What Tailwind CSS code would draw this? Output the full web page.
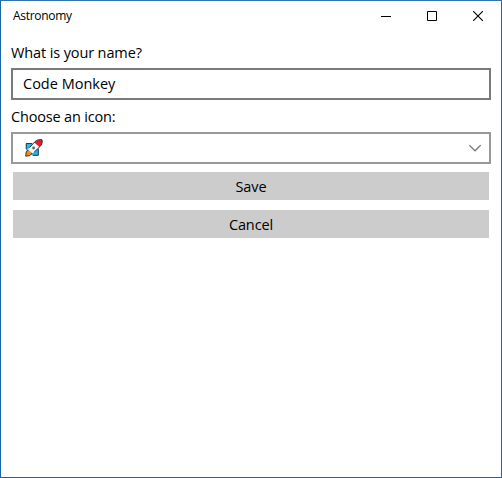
<!DOCTYPE html>
<html lang="en">
<head>
<meta charset="utf-8">
<title>Astronomy</title>
<script src="https://cdn.jsdelivr.net/npm/@tailwindcss/browser@4"></script>
</head>
<body class="bg-white">
<div class="flex h-[478px] w-[502px] flex-col overflow-hidden border border-t-[#2f74b0] border-l-[#1a68a6] border-r-[#2b6595] border-b-[#22639a] bg-white font-['Open_Sans','Noto_Sans',sans-serif] text-[14.5px] leading-5 text-black">
  <header class="flex h-[30px] shrink-0 items-center justify-between pl-3">
    <h1 class="text-[12px] leading-4 tracking-[-0.3px]">Astronomy</h1>
    <div class="flex h-full">
      <button class="flex w-[46px] items-center justify-center" aria-label="Minimize">
        <svg class="h-[10px] w-[10px]" viewBox="0 0 10 10" shape-rendering="crispEdges"><path d="M0 5h10v1H0z"/></svg>
      </button>
      <button class="flex w-[46px] items-center justify-center" aria-label="Maximize">
        <svg class="h-[10px] w-[10px]" viewBox="0 0 10 10" fill="none" stroke="#000"><path d="M.5 .5h9v9h-9z"/></svg>
      </button>
      <button class="flex w-[46px] items-center justify-center" aria-label="Close">
        <svg class="h-[10px] w-[10px]" viewBox="0 0 10 10" fill="none" stroke="#000" stroke-width="1.1"><path d="M0 0l10 10M10 0L0 10"/></svg>
      </button>
    </div>
  </header>
  <main class="flex flex-col px-[10px] pt-3">
    <label class="h-5 tracking-[-0.12px]">What is your name?</label>
    <div class="mt-[5px] flex h-8 items-center border-2 border-[#7a7a7a] pl-[10px]">Code Monkey</div>
    <label class="mt-[7px] h-5 tracking-[-0.17px]">Choose an icon:</label>
    <div class="mt-[5px] flex h-8 items-center justify-between border-2 border-[#999999] pr-2 pl-3">
      <svg class="h-[18px] w-[18px]" viewBox="0 0 18 18">
        <path d="M1 4.5h12.5v12H7L1 11z" fill="#20b9ec"/>
        <path d="M1.2 10V4.5H7M13.3 10v6.3H8" fill="none" stroke="#252525" stroke-width=".9"/>
        <path d="M.7 17.2l.5-4.5 2.9-2.2 3.4 3.3-2.8 2.9z" fill="#f58a1f" stroke="#30251d" stroke-width=".9"/>
        <path d="M2.8 10.5L9.9 2.7C11.6 1 14.5.2 17 .8c.7 2.7-.2 5-2 6.8l-7.4 7z" fill="#f4f4f4"/>
        <path d="M9.2 3.4C11.1 1.3 14.4.2 17 .8c.7 2.8-.2 5-2.4 7.2z" fill="#e51b32"/>
        <path d="M4.5 8.6l5.4-5.9C11.6 1 14.5.2 17 .8c.7 2.7-.2 5-2 6.8l-5.8 5.5" fill="none" stroke="#202020" stroke-width=".9"/>
        <circle cx="8.6" cy="9" r="1.4" fill="#3f6f83"/>
      </svg>
      <svg class="h-[8px] w-[12px]" viewBox="0 0 12 8" fill="none" stroke="#777" stroke-width="1.2"><path d="M.3 1.2L6 6.8l5.7-5.6"/></svg>
    </div>
    <button class="mx-[2px] mt-2 flex h-7 items-center justify-center bg-[#cccccc] pt-[2px] tracking-[-0.1px]">Save</button>
    <button class="mx-[2px] mt-[10px] flex h-7 items-center justify-center bg-[#cccccc] pt-[2px] tracking-[-0.1px]">Cancel</button>
  </main>
</div>
</body>
</html>
